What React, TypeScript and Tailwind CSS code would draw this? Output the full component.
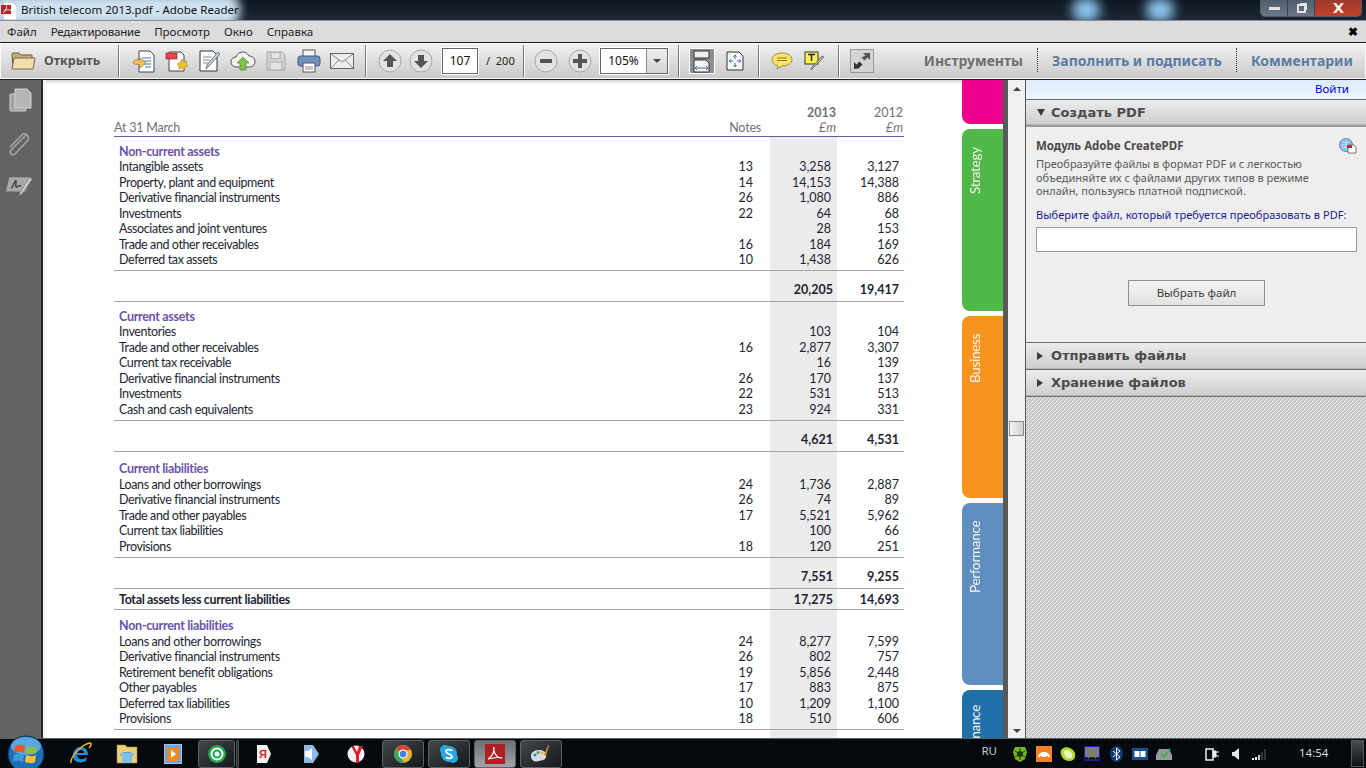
import type { ReactNode } from 'react';

type Row = { label: string; note?: string; a?: string; b?: string; kind?: 'head' };

const SECTIONS: { rows: Row[] }[] = [
  {
    rows: [
      { label: 'Non-current assets', kind: 'head' },
      { label: 'Intangible assets', note: '13', a: '3,258', b: '3,127' },
      { label: 'Property, plant and equipment', note: '14', a: '14,153', b: '14,388' },
      { label: 'Derivative financial instruments', note: '26', a: '1,080', b: '886' },
      { label: 'Investments', note: '22', a: '64', b: '68' },
      { label: 'Associates and joint ventures', a: '28', b: '153' },
      { label: 'Trade and other receivables', note: '16', a: '184', b: '169' },
      { label: 'Deferred tax assets', note: '10', a: '1,438', b: '626' },
    ],
  },
  {
    rows: [
      { label: 'Current assets', kind: 'head' },
      { label: 'Inventories', a: '103', b: '104' },
      { label: 'Trade and other receivables', note: '16', a: '2,877', b: '3,307' },
      { label: 'Current tax receivable', a: '16', b: '139' },
      { label: 'Derivative financial instruments', note: '26', a: '170', b: '137' },
      { label: 'Investments', note: '22', a: '531', b: '513' },
      { label: 'Cash and cash equivalents', note: '23', a: '924', b: '331' },
    ],
  },
  {
    rows: [
      { label: 'Current liabilities', kind: 'head' },
      { label: 'Loans and other borrowings', note: '24', a: '1,736', b: '2,887' },
      { label: 'Derivative financial instruments', note: '26', a: '74', b: '89' },
      { label: 'Trade and other payables', note: '17', a: '5,521', b: '5,962' },
      { label: 'Current tax liabilities', a: '100', b: '66' },
      { label: 'Provisions', note: '18', a: '120', b: '251' },
    ],
  },
];

const LAST: Row[] = [
  { label: 'Non-current liabilities', kind: 'head' },
  { label: 'Loans and other borrowings', note: '24', a: '8,277', b: '7,599' },
  { label: 'Derivative financial instruments', note: '26', a: '802', b: '757' },
  { label: 'Retirement benefit obligations', note: '19', a: '5,856', b: '2,448' },
  { label: 'Other payables', note: '17', a: '883', b: '875' },
  { label: 'Deferred tax liabilities', note: '10', a: '1,209', b: '1,100' },
  { label: 'Provisions', note: '18', a: '510', b: '606' },
];

const TOTALS = [
  ['20,205', '19,417'],
  ['4,621', '4,531'],
  ['7,551', '9,255'],
];

function TableRow({ row }: { row: Row }) {
  const head = row.kind === 'head';
  return (
    <div className="grid h-[15.5px] grid-cols-[656px_67px_67px] items-center leading-[15px]">
      <div className="flex items-center justify-between pl-[5px] pr-[17px]">
        <span className={head ? 'font-bold tracking-[-0.3px] text-[#6a52a8]' : 'tracking-[-0.4px] text-[#231f33]'}>
          {row.label}
        </span>
        <span className="text-[#231f33]">{row.note}</span>
      </div>
      <div className="h-full bg-[#ececec] pr-[6px] text-right text-[#231f33]">{row.a}</div>
      <div className="pr-[5px] text-right text-[#231f33]">{row.b}</div>
    </div>
  );
}

function Gap({ h, rule, a, b, label, pt = '' }: { h: string; rule?: boolean; a?: string; b?: string; label?: string; pt?: string }) {
  return (
    <div className={`grid grid-cols-[656px_67px_67px] font-bold text-[#231f33] ${h} ${rule ? 'border-b border-[#a5a5a5]' : ''}`}>
      <div className={`flex items-center pl-[5px] tracking-[-0.35px] ${pt}`}>{label}</div>
      <div className={`flex h-full items-center justify-end bg-[#ececec] pr-[4px] ${pt}`}>{a}</div>
      <div className={`flex h-full items-center justify-end pr-[5px] ${pt}`}>{b}</div>
    </div>
  );
}

function BalanceSheet() {
  return (
    <div className="ml-[68px] w-[790px] pt-[24px] font-['Lato',sans-serif] text-[12.5px]">
      <div className="grid h-[33px] grid-cols-[656px_67px_67px] border-b border-[#6a5a9c] leading-[15px] text-[#6f6f78]">
        <div className="flex items-end justify-between pb-[1px] tracking-[-0.2px]">
          <span>At 31 March</span>
          <span className="pr-[9px]">Notes</span>
        </div>
        <div className="flex flex-col justify-end pb-[1px] pr-[1px] text-right">
          <div className="font-bold">2013</div>
          <div className="italic">£m</div>
        </div>
        <div className="flex flex-col justify-end pb-[1px] pr-[1px] text-right">
          <div>2012</div>
          <div className="italic">£m</div>
        </div>
      </div>
      <Gap h="h-[6.5px]" />
      {SECTIONS.map((s, i) => (
        <div key={i}>
          {s.rows.map((r) => (
            <TableRow key={r.label} row={r} />
          ))}
          <Gap h="h-[3.5px]" rule />
          <Gap h="h-[31px]" rule pt="pt-[9px]" a={TOTALS[i][0]} b={TOTALS[i][1]} />
          {i < 2 && <Gap h={i === 0 ? 'h-[6.5px]' : 'h-[9.5px]'} />}
        </div>
      ))}
      <Gap h="h-[21px]" rule pt="pt-[2px]" label="Total assets less current liabilities" a="17,275" b="14,693" />
      <Gap h="h-[8.5px]" />
      {LAST.map((r) => (
        <TableRow key={r.label} row={r} />
      ))}
      <Gap h="h-[3.5px]" rule />
      <Gap h="h-[9px]" />
    </div>
  );
}

function SideTabs() {
  const tabs = [
    { t: '', c: 'h-[44px] rounded-bl-[8px] bg-[#ec008c]', mt: '' },
    { t: 'Strategy', c: 'h-[182px] rounded-l-[8px] bg-[#50b848]', mt: 'mt-[5px]' },
    { t: 'Business', c: 'h-[182px] rounded-l-[8px] bg-[#f7941d]', mt: 'mt-[5px]' },
    { t: 'Performance', c: 'h-[182px] rounded-l-[8px] bg-[#5f8fc0]', mt: 'mt-[5px]' },
    { t: 'Finance', c: 'h-[48px] rounded-tl-[8px] bg-[#1f6fa8]', mt: 'mt-[5px]' },
  ];
  return (
    <div className="flex h-full w-[41px] shrink-0 flex-col overflow-hidden">
      {tabs.map((x, i) => (
        <div key={i} className={`${x.mt} ${x.c} shrink-0 overflow-hidden`}>
          {x.t && (
            <div className={`flex w-[27px] rotate-180 items-center [writing-mode:vertical-rl] font-['Lato',sans-serif] text-[13.5px] leading-none tracking-[-0.3px] text-[#f6f6f0] ${i === 4 ? 'h-[48px] translate-y-[11px]' : 'h-[182px] justify-end pb-[18px]'}`}>
              {x.t}
            </div>
          )}
        </div>
      ))}
    </div>
  );
}

function Scrollbar() {
  return (
    <div className="flex h-full w-[18px] shrink-0 flex-col items-center border-r border-[#555] bg-[#f0f0f0]">
      <div className="mt-[7px] h-0 w-0 border-x-[4px] border-b-[4px] border-x-transparent border-b-[#444]" />
      <div className="mt-[330px] h-[15px] w-[15px] border border-[#8a8a8a] bg-gradient-to-r from-[#f4f4f4] to-[#cfcfcf]" />
      <div className="flex-1" />
      <div className="mb-[5px] h-0 w-0 border-x-[4px] border-t-[4px] border-x-transparent border-t-[#444]" />
    </div>
  );
}

function PanelHead({ open, label }: { open?: boolean; label: string }) {
  return (
    <div className={`flex items-center gap-[7px] border-t border-[#6d6d6d] bg-gradient-to-b from-[#ececec] to-[#cdcdcd] pl-[10px] text-[13px] font-bold text-[#4b4b4b] shadow-[inset_0_-1px_0_#b5b5b5] ${open ? 'h-[26px]' : 'h-[27px]'}`}>
      {open ? (
        <span className="ml-[1px] h-0 w-0 border-x-[4px] border-t-[7px] border-x-transparent border-t-[#3c3c3c]" />
      ) : (
        <span className="ml-[1px] h-0 w-0 border-y-[4px] border-l-[6px] border-y-transparent border-l-[#3c3c3c]" />
      )}
      <span className={open ? '-ml-[1px]' : 'ml-[1px]'}>{label}</span>
    </div>
  );
}

function RightPanel() {
  return (
    <aside className="flex h-full w-[340px] shrink-0 flex-col bg-[#eeeeee] font-['DejaVu_Sans',sans-serif]">
      <div className="h-[19px] bg-gradient-to-b from-[#dcecfa] to-[#eef6fd] pr-[17px] pt-[2px] text-right font-['Noto_Sans',sans-serif] text-[11.5px] leading-[14px] text-[#0000e0]">
        Войти
      </div>
      <PanelHead open label="Создать PDF" />
      <div className="h-[217px] border-t-2 border-[#9a9a9a] pl-[10px] pr-[9px] pt-[10px]">
        <div className="flex items-start justify-between">
          <div className="font-['Noto_Sans',sans-serif] text-[11.5px] font-bold leading-[18px] text-[#4b4b4b]">Модуль Adobe CreatePDF</div>
          <svg width="18" height="16" viewBox="0 0 18 16" className="mt-[1px]">
            <circle cx="7" cy="7" r="6.5" fill="#8fb6e6" stroke="#5e86bd" />
            <path d="M1 7h12M7 1v12M3 3.500c2 1.500 6 1.500 8 0M3 10.500c2-1.500 6-1.500 8 0" stroke="#dbe9f8" fill="none" strokeWidth="0.7" />
            <path d="M9 7h6l2 2v6H9z" fill="#fff" stroke="#555" strokeWidth="0.8" />
            <rect x="8" y="7" width="5" height="3" fill="#d91c24" />
          </svg>
        </div>
        <p className="mt-[2px] max-w-[285px] font-['Noto_Sans',sans-serif] text-[11px] leading-[13.5px] text-[#595959]">
          Преобразуйте файлы в формат PDF и с легкостью объединяйте их с файлами других типов в режиме онлайн, пользуясь платной подпиской.
        </p>
        <div className="mt-[10px] whitespace-nowrap font-['Noto_Sans',sans-serif] text-[11px] leading-[14px] tracking-[0.05px] text-[#1a1a9c]">
          Выберите файл, который требуется преобразовать в PDF:
        </div>
        <div className="mt-[5px] h-[25px] border border-[#9c9c9c] bg-white" />
        <div className="mt-[28px] flex justify-center">
          <div className="flex h-[26px] w-[137px] items-center justify-center border border-[#8f8f8f] bg-gradient-to-b from-[#f4f4f4] to-[#e2e2e2] font-['Noto_Sans',sans-serif] text-[11.5px] text-[#3d3d3d]">
            Выбрать файл
          </div>
        </div>
      </div>
      <PanelHead label="Отправить файлы" />
      <PanelHead label="Хранение файлов" />
      <div className="flex-1 border-t border-[#6d6d6d] bg-[repeating-linear-gradient(135deg,#c6c6c6_0px,#c6c6c6_2.121px,#f0f0f0_2.121px,#f0f0f0_2.828px)]" />
    </aside>
  );
}

function LeftRail() {
  return (
    <div className="flex h-full w-[46px] shrink-0 border-r-[3px] border-[#f4f4f4]">
      <div className="flex w-[41px] flex-col items-center bg-[#636363] pt-[8px]">
        <svg width="24" height="24" viewBox="0 0 24 24">
          <rect x="1" y="6" width="16" height="17" rx="1" fill="#a3a3a3" stroke="#d0d0d0" />
          <path d="M6 1h12l4 4v15H6z" fill="#b5b5b5" stroke="#d4d4d4" />
        </svg>
        <svg width="24" height="26" viewBox="0 0 24 26" fill="none" stroke="#a8a8a8" strokeWidth="1.500" className="-ml-[5px] mt-[19px]">
          <path d="M20 4 5 19c-2 3 1 6 4 4L22 9c2-4-3-8-6-5L4 16" />
        </svg>
        <svg width="26" height="22" viewBox="0 0 24 20" className="-ml-[4px] mt-[18px]">
          <path d="M3 2h20l-5 13H0z" fill="#a9a9a9" />
          <path d="M5 12c2-2 3-7 4-7s-1 7 1 6 2-2 4-1" fill="none" stroke="#333" strokeWidth="1.200" />
          <path d="M22 2 13 16l-1 3 3-2 9-13z" fill="#cfcfcf" stroke="#777" strokeWidth="0.6" />
        </svg>
      </div>
      <div className="w-[2px] bg-[#2b2b2b]" />
    </div>
  );
}

function Sep() {
  return <div className="h-[32px] w-[2px] shrink-0 border-r border-white bg-[#777]" />;
}

function Tool({ w, children }: { w: string; children: ReactNode }) {
  return <div className={`flex shrink-0 items-center justify-center ${w}`}>{children}</div>;
}

function RoundBtn({ d }: { d: string }) {
  return (
    <svg width="24" height="24" viewBox="0 0 24 24" className="shrink-0">
      <circle cx="12" cy="12" r="11" fill="#e2e2e2" stroke="#a8a8a8" />
      <path d={d} fill="#555" />
    </svg>
  );
}

function Toolbar() {
  return (
    <div className="flex h-[38px] items-center border-y border-[#1f1f1f] bg-gradient-to-b from-[#f2f2f2] to-[#c9c9c9] font-['Noto_Sans',sans-serif] shadow-[inset_0_0_0_1px_#f8f8f8]">
      <Tool w="w-[44px] pl-[2px]">
        <svg width="25" height="20" viewBox="0 0 25 20">
          <path d="M1 3a1 1 0 0 1 1-1h6l2 2h11v13H2z" fill="#c7ad78" stroke="#6d5c3b" />
          <path d="M1 18 3 7h21l-2 11z" fill="#f3deaa" stroke="#7b6a45" />
        </svg>
      </Tool>
      <span className="w-[74px] shrink-0 text-[12.5px] font-bold text-[#555]">Открыть</span>
      <Sep />
      <div className="ml-[7px] flex">
        <Tool w="w-[33px]">
          <svg width="24" height="24" viewBox="0 0 24 24">
            <path d="M7 2h11l4 4v17H7z" fill="#fff" stroke="#444" />
            <path d="M10 9h9M10 12h9M11 15h8M13 18h6" stroke="#3277d0" />
            <path d="M1 14c0-3 3-4 7-3V9l6 5-6 5v-3c-3-1-5 0-7-2z" fill="#f1bf58" stroke="#a2782a" strokeWidth="0.7" />
          </svg>
        </Tool>
        <Tool w="w-[33px]">
          <svg width="24" height="24" viewBox="0 0 24 24">
            <path d="M4 3h12l3 3v16H4z" fill="#fff" stroke="#444" />
            <rect x="1" y="4" width="11" height="6" fill="#e8464a" stroke="#8c2528" strokeWidth="0.7" />
            <path d="m17 10 2 3 3-1-1 3 2 2-3 1-1 3-2-2-3 1v-3l-2-2 3-1z" fill="#f2c12f" stroke="#a6801c" strokeWidth="0.6" />
          </svg>
        </Tool>
        <Tool w="w-[33px]">
          <svg width="24" height="24" viewBox="0 0 24 24">
            <path d="M2 2h13l4 4v16H2z" fill="#fff" stroke="#333" />
            <path d="M5 8h9M5 11h7M5 14h5" stroke="#888" />
            <path d="M22 5 11 17l-3 3 1-4L20 3z" fill="#c2d0e2" stroke="#59606b" strokeWidth="0.8" />
          </svg>
        </Tool>
        <Tool w="w-[33px]">
          <svg width="26" height="22" viewBox="0 0 26 22">
            <path d="M6 17A5 5 0 0 1 6 7a7 7 0 0 1 13-1 5.500 5.500 0 0 1 1 11z" fill="#f2f2f2" stroke="#555" />
            <path d="m13 7 6 6h-3v7h-6v-7H7z" fill="#7bc34a" stroke="#4b8a25" strokeWidth="0.7" />
          </svg>
        </Tool>
        <Tool w="w-[33px]">
          <svg width="22" height="22" viewBox="0 0 22 22">
            <path d="M2 2h15l3 3v15H2z" fill="#d4d4d4" stroke="#a8a8a8" />
            <rect x="6" y="2.500" width="9" height="6" fill="#e6e6e6" stroke="#ababab" />
            <rect x="5" y="12" width="12" height="8" fill="#e2e2e2" stroke="#ababab" />
          </svg>
        </Tool>
        <Tool w="w-[33px]">
          <svg width="24" height="24" viewBox="0 0 24 24">
            <rect x="6" y="1" width="12" height="7" fill="#f5f5f5" stroke="#555" />
            <rect x="1" y="7" width="22" height="10" rx="2.500" fill="#6d93bd" stroke="#3e5875" />
            <rect x="6" y="14" width="12" height="9" fill="#fff" stroke="#555" />
            <path d="M8 18h8M8 20h8" stroke="#888" />
          </svg>
        </Tool>
        <Tool w="w-[33px]">
          <svg width="24" height="18" viewBox="0 0 24 18">
            <rect x="0.500" y="1.500" width="23" height="15" fill="#eee" stroke="#666" />
            <path d="m1 2 11 8 11-8M1 16l8-8M23 16l-8-8" fill="none" stroke="#888" />
          </svg>
        </Tool>
      </div>
      <div className="w-[7px] shrink-0" />
      <Sep />
      <Tool w="w-[46px]"><RoundBtn d="m12 5 7 7h-4v6H9v-6H5z" /></Tool>
      <div className="-ml-[9px]"><Tool w="w-[33px]"><RoundBtn d="m12 19-7-7h4V6h6v6h4z" /></Tool></div>
      <div className="w-[5px] shrink-0" />
      <div className="flex h-[26px] w-[36px] shrink-0 items-center justify-center border border-[#666] bg-white text-[12px] text-[#111] outline outline-1 outline-white">107</div>
      <span className="ml-[8px] w-[37px] shrink-0 whitespace-nowrap text-[11px] text-[#222]">/&nbsp; 200</span>
      <Sep />
      <Tool w="w-[42px]"><RoundBtn d="M6 10h12v4H6z" /></Tool>
      <div className="ml-[1px]"><RoundBtn d="M10 5h4v5h5v4h-5v5h-4v-5H5v-4h5z" /></div>
      <div className="w-[8px] shrink-0" />
      <div className="flex h-[26px] w-[68px] shrink-0 border border-[#666] bg-white text-[12px] text-[#111] outline outline-1 outline-white">
        <span className="flex w-[45px] items-center justify-center">105%</span>
        <span className="flex flex-1 items-center justify-center border-l border-[#888] bg-gradient-to-b from-[#efefef] to-[#d4d4d4]">
          <span className="h-0 w-0 border-x-[4px] border-t-[4px] border-x-transparent border-t-[#444]" />
        </span>
      </div>
      <div className="w-[10px] shrink-0" />
      <Sep />
      <div className="w-[9px] shrink-0" />
      <Tool w="w-[26px] h-[26px] bg-[#8f8f8f] border border-white">
        <svg width="20" height="23" viewBox="0 0 20 23">
          <rect x="2" y="1" width="15" height="7" fill="#eee" stroke="#333" />
          <path d="M2 10h12l3 3v9H2z" fill="#f5f5f5" stroke="#333" />
          <path d="M3 18h13M3 18l2-2M3 18l2 2M16 18l-2-2M16 18l-2 2" stroke="#4b6fb0" fill="none" />
        </svg>
      </Tool>
      <Tool w="w-[40px]">
        <svg width="18" height="20" viewBox="0 0 18 20">
          <path d="M1 1h12l4 4v14H1z" fill="#f5f5f5" stroke="#333" />
          <path d="M9 4v4M9 12v4M3 10h4M11 10h4M9 4 7.500 6M9 4l1.500 2M9 16l-1.500-2M9 16l1.500-2M3 10l2-1.500M3 10l2 1.500M15 10l-2-1.500M15 10l-2 1.500" stroke="#4b6fb0" fill="none" />
        </svg>
      </Tool>
      <div className="w-[3px] shrink-0" />
      <Sep />
      <Tool w="w-[44px]">
        <svg width="22" height="18" viewBox="0 0 22 18">
          <path d="M11 1c5.500 0 10 2.500 10 6.500S16.500 14 11 14l-5 3 1-3.500C3.500 13 1 10.500 1 7.500 1 3.500 5.500 1 11 1z" fill="#fbe36a" stroke="#a08d42" />
          <path d="M6 6h10M6 8.500h10" stroke="#8c7a2a" />
        </svg>
      </Tool>
      <Tool w="w-[22px]">
        <svg width="22" height="20" viewBox="0 0 22 20">
          <rect x="1" y="1" width="13" height="12" fill="#fdf04f" stroke="#333" />
          <path d="M4 3.500h7M7.500 3.500V10" stroke="#222" strokeWidth="1.400" fill="none" />
          <path d="M20 6 9 17l-2 2 1-3L18 5z" fill="#c6b890" stroke="#59606b" strokeWidth="0.8" />
        </svg>
      </Tool>
      <div className="w-[12px] shrink-0" />
      <Sep />
      <div className="w-[10px] shrink-0" />
      <div className="flex h-[24px] w-[24px] shrink-0 items-center justify-center border border-[#999] bg-[#d4d4d4]">
        <svg width="20" height="20" viewBox="0 0 20 20">
          <path d="M11 2h7v7l-2.500-2.500-3 3-3-3 4-2z" fill="#555" />
          <path d="M2 18v-7l2.500 2.500 3-3 3 3-4 4z" fill="#333" />
        </svg>
      </div>
      <div className="flex-1" />
      <div className="-mt-[2px] flex items-center pr-[13px] text-[14px] font-bold">
        <span className="text-[#6f6f6f]">Инструменты</span>
        <span className="mx-[14px] h-[24px] border-l border-dotted border-[#333]" />
        <span className="text-[#5b7ba3]">Заполнить и подписать</span>
        <span className="mx-[14px] h-[24px] border-l border-dotted border-[#333]" />
        <span className="text-[#5b7ba3]">Комментарии</span>
      </div>
    </div>
  );
}

function TitleBar() {
  return (
    <div className="relative flex h-[21px] items-start overflow-hidden border-b border-[#8b8f94] bg-gradient-to-b from-[#0f1722] to-[#1c2733]">
      <div className="absolute -left-[10px] -top-[6px] h-[32px] w-[250px] rounded-[14px] bg-[#cfe2f2] blur-[5px]" />
      <div className="absolute left-[1072px] -top-[2px] h-[24px] w-[28px] rounded-full bg-[#8cc6f2] blur-[6px]" />
      <div className="absolute left-[1146px] -top-[2px] h-[24px] w-[28px] rounded-full bg-[#8cc6f2] blur-[6px]" />
      <svg width="16" height="18" viewBox="0 0 16 18" className="relative ml-[1px] mt-[2px]">
        <path d="M2 0h10l4 4v14H2z" fill="#fff" stroke="#777" strokeWidth="0.5" />
        <rect x="0" y="3" width="10" height="9" fill="#b3242a" />
        <path d="M2 11c3-2 4-6 3.500-7.500M3 8.500c3-1 6-1 7 0" fill="none" stroke="#fff" strokeWidth="0.8" />
      </svg>
      <span className="relative ml-[4px] mt-[2px] font-['Noto_Sans',sans-serif] text-[11.5px] leading-[16px] text-[#111]">
        British telecom 2013.pdf - Adobe Reader
      </span>
      <div className="relative ml-auto mr-[4px] flex h-[17px] w-[102px] overflow-hidden rounded-b-[5px] border border-t-0 border-[#555f6b] text-white">
        <div className="flex w-[27px] items-center justify-center border-r border-[#39414b] bg-gradient-to-b from-[#4f5d6c] to-[#6b7886]">
          <span className="h-[3px] w-[11px] bg-[#e4e4e4]" />
        </div>
        <div className="flex w-[27px] items-center justify-center border-r border-[#39414b] bg-gradient-to-b from-[#4f5d6c] to-[#6b7886]">
          <span className="relative h-[9px] w-[9px] border-2 border-[#e4e4e4] shadow-[2px_-2px_0_-1px_#e4e4e4]" />
        </div>
        <div className="flex flex-1 items-center justify-center bg-gradient-to-b from-[#9b3b2e] to-[#c3412a]">
          <svg width="13" height="10" viewBox="0 0 13 10">
            <path d="M1 0h3l2.500 3L9 0h3L8.300 5 12 10H9L6.500 7 4 10H1l3.700-5z" fill="#f4ece6" />
          </svg>
        </div>
      </div>
    </div>
  );
}

function MenuBar() {
  return (
    <div className="flex h-[21px] items-center gap-[14px] bg-[#dcdcdc] pl-[7px] pr-[8px] font-['Noto_Sans',sans-serif] text-[11.5px] text-[#222]">
      <span>Файл</span>
      <span className="tracking-[-0.2px]">Редактирование</span>
      <span>Просмотр</span>
      <span>Окно</span>
      <span>Справка</span>
      <span className="ml-auto text-[12px] font-black leading-none text-black">✖</span>
    </div>
  );
}

function TaskBtn({ children, active, w = 'w-[42px]' }: { children: ReactNode; active?: boolean; w?: string }) {
  return (
    <div className={`flex h-[28px] shrink-0 items-center justify-center rounded-[3px] border border-[#5d6064] ${w} ${active ? 'bg-gradient-to-b from-[#6d7074] to-[#a2a4a6]' : 'bg-gradient-to-br from-[#44474b] to-[#15181c]'}`}>
      {children}
    </div>
  );
}

function Plain({ w, children }: { w: string; children: ReactNode }) {
  return <div className={`flex shrink-0 items-center justify-center ${w}`}>{children}</div>;
}

function Taskbar() {
  return (
    <div className="relative flex h-[30px] items-center border-t border-[#5b6269] bg-[#06090d] font-['Noto_Sans',sans-serif]">
      <svg width="38" height="38" viewBox="0 0 38 38" className="absolute left-[7px] -top-[4px]">
        <circle cx="19" cy="19" r="18" fill="#1d6fb5" stroke="#0d2f4f" />
        <ellipse cx="19" cy="11" rx="15" ry="9" fill="#5aa7df" />
        <path d="M8 11c3-2 7-1 10 0l-1 7c-3-1-7-2-10 0z" fill="#e8562f" />
        <path d="M20 11c3 1 7 2 10 0l-1 7c-3 2-7 1-10 0z" fill="#88c23f" />
        <path d="M7 20c3-2 7-1 10 0l-1 7c-3-1-7-2-10 0z" fill="#3f9ad8" />
        <path d="M19 20c3 1 7 2 10 0l-1 7c-3 2-7 1-10 0z" fill="#f5c232" />
      </svg>
      <div className="ml-[58px] flex items-center">
        <Plain w="w-[46px]">
          <svg width="22" height="24" viewBox="0 0 22 24">
            <path d="M3 14c0-6 4-9 8-9s7 3 7 8H7c0 4 5 6 10 2l-1 4c-6 3-13 1-13-5zm4-3h7c0-4-6-4-7 0z" fill="#1c8ee0" />
            <path d="M1 21C0 16 10 3 20 1c2 0 1 3-1 5" fill="none" stroke="#f2b32c" strokeWidth="1.500" />
          </svg>
        </Plain>
        <Plain w="w-[46px]">
          <svg width="22" height="20" viewBox="0 0 22 20">
            <path d="M1 1h8l2 2h10v16H1z" fill="#e8cf7a" stroke="#a58c3a" strokeWidth="0.6" />
            <rect x="7" y="8" width="8" height="11" fill="#4d9bd6" />
            <path d="M4 9h14v3h-2v7H6v-7H4z" fill="#7ec0ea" />
          </svg>
        </Plain>
        <Plain w="w-[46px]">
          <svg width="18" height="20" viewBox="0 0 18 20">
            <rect x="0.500" y="0.500" width="17" height="19" fill="#6ea6d8" stroke="#9cc4e8" />
            <rect x="3" y="3" width="12" height="14" fill="#f08a1d" />
            <path d="m7 6 5 4-5 4z" fill="#fff" />
          </svg>
        </Plain>
        <div className="ml-[2px]">
          <TaskBtn w="w-[37px]">
            <svg width="20" height="20" viewBox="0 0 20 20">
              <circle cx="10" cy="10" r="9" fill="#1fa84a" />
              <circle cx="10" cy="10" r="6.500" fill="#fff" />
              <circle cx="10" cy="10" r="3.500" fill="none" stroke="#1fa84a" strokeWidth="2" />
            </svg>
          </TaskBtn>
        </div>
        <div className="ml-[1px] h-[28px] w-[3px] rounded-[1px] border border-[#4a4d51] bg-[#2a2d31]" />
        <Plain w="w-[50px]">
          <svg width="16" height="20" viewBox="0 0 16 20">
            <path d="M1 1h10l4 9-4 9H1z" fill="#f2f2f2" />
            <text x="7" y="14" textAnchor="middle" fontSize="11" fontWeight="700" fontFamily="Liberation Sans, sans-serif" fill="#d9232e">Я</text>
          </svg>
        </Plain>
        <Plain w="w-[44px]">
          <svg width="18" height="20" viewBox="0 0 18 20">
            <path d="M2 1h9l6 9-6 9H2z" fill="#8db9e6" />
            <path d="M3 7h3l4-3v12l-4-3H3z" fill="#fff" />
          </svg>
        </Plain>
        <Plain w="w-[46px]">
          <svg width="18" height="20" viewBox="0 0 18 20">
            <circle cx="9" cy="10" r="8.500" fill="#f4f4f4" />
            <path d="M9 19v-8L4 2h3l3 6 2-6h4l-4 9v8z" fill="#e0202a" />
          </svg>
        </Plain>
        <div className="ml-[3px]">
          <TaskBtn>
            <svg width="20" height="20" viewBox="0 0 20 20">
              <circle cx="10" cy="10" r="9" fill="#e9b52c" />
              <path d="M10 1a9 9 0 0 1 8 5h-8a4 4 0 0 0-4 2L3.500 4A9 9 0 0 1 10 1z" fill="#dd4436" />
              <path d="m3.500 4 4 8 3.500 7A9 9 0 0 1 3.500 4z" fill="#3aa757" />
              <circle cx="10" cy="10" r="4" fill="#3f84e8" stroke="#fff" strokeWidth="1.200" />
            </svg>
          </TaskBtn>
        </div>
        <div className="ml-[4px]">
          <TaskBtn>
            <svg width="20" height="20" viewBox="0 0 20 20">
              <circle cx="6" cy="6" r="5" fill="#27a7e2" />
              <circle cx="14" cy="14" r="5" fill="#27a7e2" />
              <circle cx="10" cy="10" r="8" fill="#27a7e2" />
              <path d="M13 7c-1-2-6-2-6 .5S13 10 13 12.500 8 15 7 13" fill="none" stroke="#fff" strokeWidth="1.800" />
            </svg>
          </TaskBtn>
        </div>
        <div className="ml-[4px]">
          <TaskBtn active>
            <svg width="20" height="20" viewBox="0 0 20 20">
              <rect width="20" height="20" fill="#ad1f23" />
              <path d="M3 15c4-2 6-7 6-10s-1-2 0 2 4 7 7 7-4-1-8 0-4 1-5 1z" fill="none" stroke="#fff" strokeWidth="1.100" />
            </svg>
          </TaskBtn>
        </div>
        <div className="ml-[4px]">
          <TaskBtn>
            <svg width="22" height="20" viewBox="0 0 22 20">
              <path d="M1 12c0-5 5-6 9-6s7 3 6 7-5 3-7 4-8 1-8-5z" fill="#d7dce2" />
              <circle cx="5" cy="11" r="1.500" fill="#2f7ccf" />
              <circle cx="8" cy="8.500" r="1.500" fill="#3aa757" />
              <circle cx="12" cy="9" r="1.500" fill="#e9b52c" />
              <path d="m18 1 1 1-3 10-2-1z" fill="#d9822b" />
            </svg>
          </TaskBtn>
        </div>
      </div>
      <div className="flex-1" />
      <span className="mr-[11px] -mt-[5px] text-[11.5px] text-[#c9c9c9]">RU</span>
      <div className="flex items-center">
        <Plain w="w-[24px]">
          <svg width="16" height="16" viewBox="0 0 16 16">
            <path d="M3 1h10l2 5-2 7-5 3-5-3-2-7z" fill="#7ab51d" />
            <circle cx="8" cy="8" r="3" fill="#1d3a0a" />
            <path d="m3 5 10 6M13 5 3 11M8 2v12" stroke="#1d3a0a" />
          </svg>
        </Plain>
        <Plain w="w-[24px]">
          <svg width="16" height="16" viewBox="0 0 16 16">
            <rect width="16" height="16" fill="#f08222" />
            <path d="M2 11c0-3 3-5 6-5s6 2 6 5z" fill="#fff" />
            <circle cx="5" cy="11" r="1" fill="#f08222" />
            <circle cx="11" cy="11" r="1" fill="#f08222" />
          </svg>
        </Plain>
        <Plain w="w-[24px]">
          <svg width="16" height="16" viewBox="0 0 16 16">
            <path d="M2 3c3-3 8-2 11 1s3 8 0 10-9 1-11-3-2-6 0-8z" fill="#a9dc26" />
            <path d="M4 5c2-2 5-1 7 1s2 5 0 6-5 0-6-2-2-4-1-5z" fill="#e8f6c4" />
          </svg>
        </Plain>
        <Plain w="w-[24px]">
          <svg width="16" height="16" viewBox="0 0 16 16">
            <rect x="0.500" y="0.500" width="15" height="11" fill="#7d7d7d" stroke="#1c1c9c" />
            <path d="M0 14h16" stroke="#1c1c9c" strokeWidth="2" />
            <path d="M4 12h1M11 12h1" stroke="#aaa" />
          </svg>
        </Plain>
        <Plain w="w-[24px]">
          <svg width="13" height="16" viewBox="0 0 13 16">
            <ellipse cx="6.500" cy="8" rx="6.500" ry="8" fill="#123a78" />
            <path d="m3 5 7 6-3.500 3V2L10 5l-7 6" fill="none" stroke="#fff" strokeWidth="1" />
          </svg>
        </Plain>
        <Plain w="w-[24px]">
          <svg width="16" height="12" viewBox="0 0 16 12">
            <rect width="16" height="12" fill="#15508f" />
            <rect x="2.500" y="3" width="5" height="6" fill="#fff" />
            <rect x="8.500" y="3" width="5" height="6" fill="#fff" />
          </svg>
        </Plain>
        <Plain w="w-[24px]">
          <svg width="16" height="14" viewBox="0 0 16 14">
            <path d="M0 8 3 2h10l3 6v5H0z" fill="#9a9a9a" />
            <path d="m5 7 3 3 6-8" fill="none" stroke="#3bb54a" strokeWidth="2" />
          </svg>
        </Plain>
      </div>
      <div className="w-[24px] shrink-0" />
      <div className="flex items-center">
        <Plain w="w-[24px]">
          <svg width="14" height="14" viewBox="0 0 14 14">
            <path d="M1 2h7v11H1z" fill="none" stroke="#eee" strokeWidth="1.500" />
            <path d="M8 5h6M8 9h6M8 4h3v6H8z" fill="#eee" stroke="#eee" />
          </svg>
        </Plain>
        <Plain w="w-[24px]">
          <svg width="8" height="14" viewBox="0 0 8 14">
            <path d="M0 5h2l5-4v12L2 9H0z" fill="#e4e4e4" />
          </svg>
        </Plain>
        <Plain w="w-[24px]">
          <svg width="16" height="12" viewBox="0 0 16 12">
            <path d="M0 10h2v2H0zM3 9h2v3H3z" fill="#eee" />
            <path d="M6 7h2v5H6z" fill="#ccc" />
            <path d="M9 4h2v8H9zM12 1h2v11h-2z" fill="#333" />
          </svg>
        </Plain>
      </div>
      <span className="ml-[27px] w-[45px] -mt-[1px] text-[11.5px] text-[#dcdcdc]">14:54</span>
      <div className="ml-[7px] mr-[2px] h-[27px] w-[13px] border border-[#555] bg-gradient-to-b from-[#4a4d51] to-[#0e1115]" />
    </div>
  );
}

export default function App() {
  return (
    <div className="flex h-[768px] w-[1366px] flex-col overflow-hidden bg-white">
      <TitleBar />
      <MenuBar />
      <Toolbar />
      <div className="flex h-[658px] min-h-0">
        <LeftRail />
        <div className="flex h-full min-w-0 flex-1 overflow-hidden bg-white shadow-[inset_0_4px_4px_-3px_#bbb]">
          <div className="h-full w-[916px] shrink-0 overflow-hidden">
            <BalanceSheet />
          </div>
          <SideTabs />
          <div className="h-full w-[5px] shrink-0 bg-[#595959]" />
          <Scrollbar />
        </div>
        <RightPanel />
      </div>
      <Taskbar />
    </div>
  );
}
